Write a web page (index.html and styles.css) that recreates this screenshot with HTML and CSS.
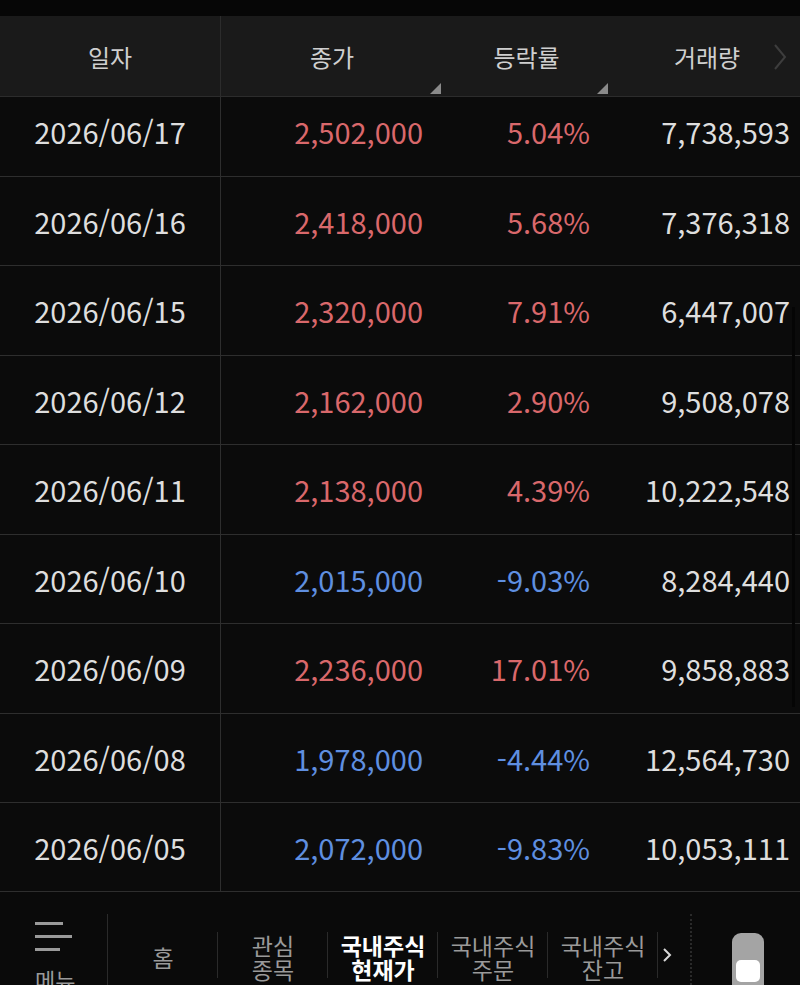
FILE: index.html
```html
<!DOCTYPE html>
<html lang="ko">
<head>
  <meta charset="UTF-8">
  <meta name="viewport" content="width=device-width, initial-scale=1.0">
  <title>일자별 시세</title>
  <link rel="stylesheet" href="styles.css">
</head>
<body>
  <div class="screen">
    <div class="top-strip"></div>

    <div class="table-head">
      <div class="th th-date">일자</div>
      <div class="th th-sort">종가</div>
      <div class="th th-sort">등락률</div>
      <div class="th th-vol">
        거래량
        <svg class="head-arrow" width="14" height="28" viewBox="0 0 14 28">
          <path d="M2 2 L12 14 L2 26" fill="none" stroke="#3d3d3d" stroke-width="2"/>
        </svg>
      </div>
    </div>

    <div class="table-body">
      <div class="rows">
        <div class="row">
          <div class="td date">2026/06/17</div>
          <div class="td up">2,502,000</div>
          <div class="td up">5.04%</div>
          <div class="td vol">7,738,593</div>
        </div>
        <div class="row">
          <div class="td date">2026/06/16</div>
          <div class="td up">2,418,000</div>
          <div class="td up">5.68%</div>
          <div class="td vol">7,376,318</div>
        </div>
        <div class="row">
          <div class="td date">2026/06/15</div>
          <div class="td up">2,320,000</div>
          <div class="td up">7.91%</div>
          <div class="td vol">6,447,007</div>
        </div>
        <div class="row">
          <div class="td date">2026/06/12</div>
          <div class="td up">2,162,000</div>
          <div class="td up">2.90%</div>
          <div class="td vol">9,508,078</div>
        </div>
        <div class="row">
          <div class="td date">2026/06/11</div>
          <div class="td up">2,138,000</div>
          <div class="td up">4.39%</div>
          <div class="td vol">10,222,548</div>
        </div>
        <div class="row">
          <div class="td date">2026/06/10</div>
          <div class="td down">2,015,000</div>
          <div class="td down">-9.03%</div>
          <div class="td vol">8,284,440</div>
        </div>
        <div class="row">
          <div class="td date">2026/06/09</div>
          <div class="td up">2,236,000</div>
          <div class="td up">17.01%</div>
          <div class="td vol">9,858,883</div>
        </div>
        <div class="row">
          <div class="td date">2026/06/08</div>
          <div class="td down">1,978,000</div>
          <div class="td down">-4.44%</div>
          <div class="td vol">12,564,730</div>
        </div>
        <div class="row">
          <div class="td date">2026/06/05</div>
          <div class="td down">2,072,000</div>
          <div class="td down">-9.83%</div>
          <div class="td vol">10,053,111</div>
        </div>
      </div>
      <div class="scrollbar"></div>
    </div>

    <nav class="bottom-nav">
      <div class="nav-menu">
        <div class="burger">
          <span class="b1"></span>
          <span class="b2"></span>
          <span class="b3"></span>
        </div>
        <div class="menu-label">메뉴</div>
      </div>
      <div class="nav-item">홈</div>
      <div class="nav-item">관심<br>종목</div>
      <div class="nav-item active">국내주식<br>현재가</div>
      <div class="nav-item">국내주식<br>주문</div>
      <div class="nav-item">국내주식<br>잔고</div>
      <div class="nav-more">
        <svg width="10" height="16" viewBox="0 0 10 16">
          <path d="M2 2 L8 8 L2 14" fill="none" stroke="#d8d8d8" stroke-width="2"/>
        </svg>
      </div>
      <div class="nav-toggle">
        <div class="toggle">
          <div class="knob"></div>
        </div>
      </div>
    </nav>
  </div>
</body>
</html>
```

FILE: styles.css
```css
body {
  margin: 0;
  background: #0b0b0b;
  font-family: "Noto Sans CJK KR", "Noto Sans", sans-serif;
}
.screen {
  width: 800px;
  height: 985px;
  overflow: hidden;
  display: flex;
  flex-direction: column;
  background: #0b0b0b;
}
.top-strip {
  height: 16px;
  background: #060606;
}

/* header */
.table-head {
  height: 80px;
  display: grid;
  grid-template-columns: 221px 222px 167px 190px;
  background: #1a1a1a;
  border-bottom: 1px solid #2c2c2c;
}
.th {
  position: relative;
  display: flex;
  align-items: center;
  justify-content: center;
  color: #cfcfcf;
  font-size: 24px;
}
.th-date {
  border-right: 1px solid #2c2c2c;
}
.th-sort::after {
  content: "";
  position: absolute;
  right: 2px;
  bottom: 2px;
  border-left: 11px solid transparent;
  border-bottom: 11px solid #8a8a8a;
}
.th-vol {
  padding-left: 4px;
}
.head-arrow {
  position: absolute;
  right: 13px;
  top: 27px;
}

/* body */
.table-body {
  position: relative;
  height: 794px;
  overflow: hidden;
}
.rows {
  margin-top: -10px;
}
.row {
  height: 89.5px;
  box-sizing: border-box;
  display: grid;
  grid-template-columns: 221px 222px 167px 190px;
  border-bottom: 1px solid #2e2e2e;
}
.td {
  display: flex;
  align-items: center;
  justify-content: flex-end;
  padding-right: 20px;
  font-size: 29px;
  color: #dedede;
}
.td.date {
  justify-content: center;
  padding-right: 0;
  border-right: 1px solid #2e2e2e;
}
.td.up {
  color: #d9686b;
}
.td.down {
  color: #5f8fe0;
}
.td.vol {
  padding-right: 10px;
}
.scrollbar {
  position: absolute;
  right: 5px;
  top: 210px;
  width: 3px;
  height: 400px;
  background: #050505;
}

/* bottom nav */
.bottom-nav {
  height: 94px;
  display: flex;
  background: #0a0a0a;
  border-top: 1px solid #2e2e2e;
  box-sizing: border-box;
}
.nav-menu {
  width: 108px;
  box-sizing: border-box;
  padding: 8px 0 0 35px;
  border-right: 1px solid #2a2a2a;
  margin-top: 22px;
}
.burger span {
  display: block;
  height: 3px;
  background: #9a9a9a;
  margin-bottom: 10px;
}
.burger .b1 {
  width: 28px;
}
.burger .b2 {
  width: 37px;
}
.burger .b3 {
  width: 25px;
}
.menu-label {
  color: #9a9a9a;
  font-size: 22px;
  line-height: 24px;
  margin-top: 16px;
}
.nav-item {
  width: 110px;
  display: flex;
  align-items: center;
  justify-content: center;
  text-align: center;
  color: #9a9a9a;
  font-size: 23px;
  line-height: 24px;
  position: relative;
  padding-top: 36px;
  box-sizing: border-box;
}
.nav-item::after {
  content: "";
  position: absolute;
  right: 0;
  top: 40px;
  height: 46px;
  width: 1px;
  background: #2a2a2a;
}
.nav-item.active {
  color: #ffffff;
  font-weight: bold;
}
.nav-more {
  width: 34px;
  display: flex;
  align-items: center;
  justify-content: flex-start;
  padding-left: 4px;
  padding-top: 10px;
  box-sizing: border-box;
  border-right: 2px dotted #2a2a2a;
  margin-top: 22px;
}
.nav-toggle {
  flex: 1;
  display: flex;
  justify-content: center;
  padding-top: 41px;
  padding-left: 4px;
}
.toggle {
  width: 32px;
  height: 60px;
  border-radius: 9px;
  background: #a4a4a4;
  box-sizing: border-box;
  padding: 27px 4px 0;
}
.knob {
  height: 22px;
  border-radius: 5px;
  background: #ffffff;
}
```
